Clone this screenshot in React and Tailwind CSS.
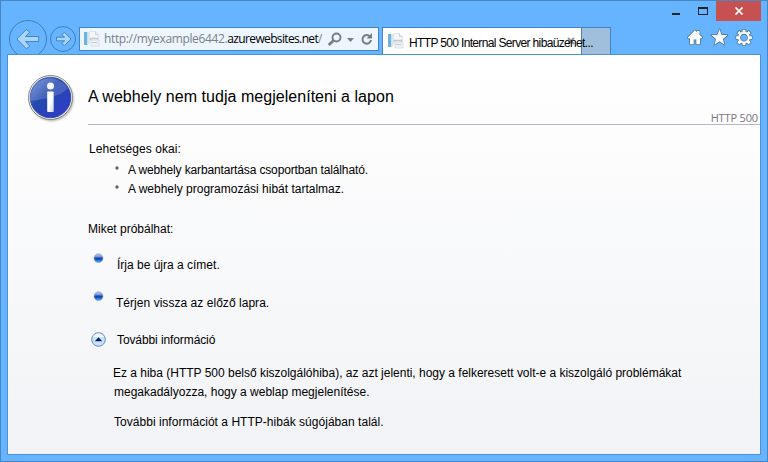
import React from "react";

function PageIcon() {
  return (
    <svg width="16" height="16" viewBox="0 0 16 16" className="shrink-0">
      <rect x="0" y="1" width="3.500" height="13" fill="#6eb2de" />
      <rect x="3.500" y="1" width="1.500" height="13" fill="#dbe8f0" />
      <path d="M5.500.5h6l3 3v8h-9z" fill="#f3f5f7" stroke="#e0e4e8" />
      <path d="M11.500.5v3h3" fill="none" stroke="#cfd5da" />
      <path d="M6.500 9V7.500h7V13" fill="none" stroke="#c3cad1" strokeWidth="1.400" />
      <path d="M7 9h8v6H7z" fill="#eef1f3" stroke="#d5dadf" strokeWidth=".8" />
      <path d="M8 11.500h5" stroke="#c3cad1" />
    </svg>
  );
}

function NavButtons() {
  return (
    <svg width="70" height="35" viewBox="8 19 70 35" className="shrink-0">
      <g fill="#66b3ff" stroke="#3f80bb">
        <circle cx="28" cy="39" r="18.500" />
        <circle cx="63" cy="39" r="12.500" />
      </g>
      <g fill="#a9d5ff" stroke="#3c7fbd" strokeWidth=".9" strokeLinejoin="round">
        <path d="M16.800 39 26.300 29.500 29.800 32 25.500 36.500H38.700V41.500H25.500L29.800 46 26.300 48.700z" />
        <path d="M71 39 64.500 32.500 61.700 34.500 64.700 37.200H56.500V40.800H64.700L61.700 43.500 64.500 45.500z" />
      </g>
    </svg>
  );
}

function AddressBar() {
  return (
    <div className="flex h-6 w-[300px] shrink-0 items-center border border-[#4384bf] bg-[#edf6fe] pl-1">
      <PageIcon />
      <span className="ml-[4px] w-[223px] whitespace-nowrap font-['Open_Sans',sans-serif] text-[12px] leading-[20px] tracking-[-0.36px] text-[#7b8187]">
        http://myexample6442.<span className="tracking-[-0.64px] text-black">azurewebsites.net</span>/
      </span>
      <svg width="48" height="16" viewBox="327 31 48 16" className="shrink-0" fill="none" stroke="#777d84">
        <circle cx="336.500" cy="37.500" r="4" strokeWidth="1.900" />
        <path d="m333.300 40.700-4.600 4.400" strokeWidth="2.700" />
        <path d="M347 38h7l-3.500 4z" fill="#777d84" stroke="none" />
        <path d="M370 36.500a4.300 4.300 0 1 0 1 3.500" strokeWidth="2" />
        <path d="M372 33v5.500h-5.500z" fill="#777d84" stroke="none" />
      </svg>
    </div>
  );
}

function Tabs() {
  return (
    <div className="ml-[3px] flex h-[27px] shrink-0">
      <div className="relative z-10 flex w-[200px] items-center border border-b-0 border-[#4384bf] bg-white pl-[5px]">
        <PageIcon />
        <span className="ml-[5px] mt-1 whitespace-nowrap font-['Liberation_Sans',sans-serif] text-[12px] leading-4 tracking-[-0.65px] text-black">
          HTTP 500 Internal Server hibaüzenet...
        </span>
        <svg width="8" height="8" viewBox="0 0 8 8" className="absolute left-[184px] top-[9px] -z-10">
          <path d="m1 1 6 6M7 1 1 7" stroke="#999" strokeWidth="2.200" />
        </svg>
      </div>
      <div className="w-[29px] border border-b-0 border-l-0 border-[#4384bf] bg-[#a0bfdc]" />
    </div>
  );
}

function Tools() {
  return (
    <svg width="68" height="20" viewBox="686 28 68 20" className="ml-auto mr-[13px] shrink-0">
      <g fill="#fff" stroke="#4a7396" strokeWidth="1.500" strokeLinejoin="round" paintOrder="stroke">
        <path d="M687.700 38.500 695 31.200l2 2V32h2.500v3.700l2.800 2.800-1.300 1.300-1-.8V45.300h-3.700V40.500h-2.600v4.800H690V39l-1 .8z" />
        <path d="m719.500 30.300 2.100 5.600 6 .2-4.700 3.900 1.600 5.700-5-3.400-5 3.400L716 40l-4.700-3.900 6-.2z" />
        <path fillRule="evenodd" d="M742.500 30.800h3v2.200l1.500.6 1.700-1.700 2 2-1.600 1.700.7 1.600h2v2.800h-2l-.7 1.600 1.600 1.700-2 2-1.700-1.600-1.500.6v2h-3v-2l-1.500-.6-1.700 1.600-2-2 1.600-1.700-.7-1.600h-2v-2.800h2l.7-1.600-1.600-1.700 2-2 1.700 1.700 1.500-.6zM744 34.700a3.900 3.900 0 1 0 .01 0z" />
      </g>
    </svg>
  );
}

function InfoIcon() {
  return (
    <svg width="48" height="50" viewBox="27 74 48 50" className="-mt-[2px] shrink-0">
      <defs>
        <linearGradient id="info" x1="0" y1="0" x2="1" y2="1">
          <stop stopColor="#6b8bdc" />
          <stop offset=".4" stopColor="#2449ad" />
          <stop offset="1" stopColor="#3339ce" />
        </linearGradient>
        <linearGradient id="stem" x1="0" y1="0" x2="1" y2="1">
          <stop offset=".5" stopColor="#fff" />
          <stop offset="1" stopColor="#d0d3df" />
        </linearGradient>
        <filter id="soft"><feGaussianBlur stdDeviation="1" /></filter>
      </defs>
      <circle cx="51.500" cy="99" r="22" fill="#777" opacity=".6" filter="url(#soft)" />
      <circle cx="50.500" cy="97.500" r="22" fill="#f5f5f5" stroke="#858585" />
      <circle cx="50.500" cy="97.500" r="20.300" fill="url(#info)" stroke="#243b8e" strokeWidth=".7" />
      <path d="M30.500 101a20 20 0 0 1 37-13C62 96 45 99 30.500 101z" fill="#fff" opacity=".16" />
      <circle cx="50.500" cy="86" r="3.500" fill="#f6f7fc" />
      <rect x="47.200" y="91.500" width="6.500" height="20.500" rx=".7" fill="url(#stem)" />
    </svg>
  );
}

function BlueBall() {
  return (
    <svg width="11" height="10" viewBox="0 0 11 10" className="-mt-px shrink-0">
      <defs>
        <linearGradient id="ball" x1="0" y1="0" x2="0" y2="1">
          <stop stopColor="#c5caec" />
          <stop offset=".38" stopColor="#738bdb" />
          <stop offset=".46" stopColor="#123cac" />
          <stop offset=".65" stopColor="#1656c4" />
          <stop offset="1" stopColor="#4bc7f0" />
        </linearGradient>
      </defs>
      <circle cx="5.500" cy="5.200" r="4.400" fill="url(#ball)" stroke="#7b91bc" strokeWidth=".6" />
    </svg>
  );
}

function Dot() {
  return (
    <svg width="4" height="4" viewBox="0 0 4 4" className="mb-[4px] shrink-0">
      <circle cx="2" cy="2" r="1.700" fill="#666" />
    </svg>
  );
}

export default function App() {
  return (
    <div className="flex h-[462px] w-[768px] flex-col overflow-hidden border border-[#4687c4] bg-[#66b3ff] font-['Liberation_Sans',sans-serif] text-[12px] leading-4 text-black">
      <div className="flex h-5 shrink-0 justify-end pr-[6px]">
        <svg width="38" height="12" viewBox="672 5 38 12" className="mr-[6px] mt-1">
          <path d="M672 13h8v2h-8z" fill="#222" />
          <path d="M698 7h10v8h-10zM699 9v5h8V9z" fill="#222" fillRule="evenodd" />
        </svg>
        <div className="flex w-[45px] items-center justify-center bg-[#c75050]">
          <svg width="10" height="8" viewBox="0 0 10 8">
            <path d="m1.500.5 7 7m0-7-7 7" stroke="#fff" strokeWidth="1.700" />
          </svg>
        </div>
      </div>

      <div className="flex h-[33px] shrink-0 pl-[7px]">
        <div className="-mt-[2px] h-[35px] w-[71px] shrink-0">
          <NavButtons />
        </div>
        <div className="flex grow pt-[6px]">
          <AddressBar />
          <Tabs />
          <Tools />
        </div>
      </div>

      <main className="mx-[6px] flex h-[401px] flex-col border border-[#4b92d5] bg-linear-to-b from-white to-[#f2f3f6] whitespace-nowrap">
        <header className="flex h-[70px] shrink-0 pl-[19px] pt-[21px]">
          <InfoIcon />
          <div className="ml-[13px] flex h-[49px] grow items-start justify-between border-b border-[#b3b8ca]">
            <h1 className="mt-[9px] text-[16px] leading-6 tracking-[0.04px]">A webhely nem tudja megjeleníteni a lapon</h1>
            <span className="mr-[2px] mt-[34px] font-['Open_Sans',sans-serif] text-[11px] leading-4 tracking-[-0.15px] text-[#77777c]">HTTP 500</span>
          </div>
        </header>

        <section className="mt-4 pl-[81px]">
          <p className="tracking-[0.08px]">Lehetséges okai:</p>
          <ul className="pl-[26px] pt-[3px]">
            <li className="flex h-[19px] items-center gap-[9px] tracking-[-0.14px]"><Dot />A webhely karbantartása csoportban található.</li>
            <li className="flex h-[19px] items-center gap-[9px]"><Dot />A webhely programozási hibát tartalmaz.</li>
          </ul>
        </section>

        <section className="mt-[23px] pl-[80px]">
          <p>Miket próbálhat:</p>
          <ul className="pl-[5px] pt-[17px]">
            <li className="flex h-[38px] items-start gap-[13px]"><BlueBall /><span className="mt-[3px]">Írja be újra a címet.</span></li>
            <li className="flex h-[38px] items-start gap-[12px]"><BlueBall /><span className="mt-[3px] tracking-[0.04px]">Térjen vissza az előző lapra.</span></li>
          </ul>
          <div className="mt-[2px] flex h-4 items-center gap-[11px] pl-[3px]">
            <svg width="15" height="15" viewBox="0 0 15 15" className="-mt-[2px]">
              <circle cx="7.500" cy="7.500" r="6.800" fill="#c5e4fa" stroke="#6688bd" />
              <path d="M2 5a6 6 0 0 1 11 0z" fill="#f3faff" />
              <path d="m3.800 9.300 3.700-4 3.700 4z" fill="#101768" />
            </svg>
            <span className="tracking-[-0.1px]">További információ</span>
          </div>
          <div className="pl-[26px] pt-[16px]">
            <p className="-ml-px leading-[19px] tracking-[-0.01px]">Ez a hiba (HTTP 500 belső kiszolgálóhiba), az azt jelenti, hogy a felkeresett volt-e a kiszolgáló problémákat</p>
            <p className="leading-[19px]">megakadályozza, hogy a weblap megjelenítése.</p>
            <p className="mt-[12px] tracking-[0.03px]">További információt a HTTP-hibák súgójában talál.</p>
          </div>
        </section>
      </main>
    </div>
  );
}
